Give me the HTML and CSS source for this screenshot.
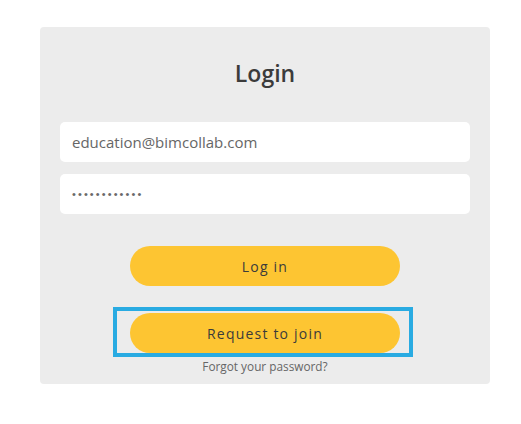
FILE: index.html
```html
<!DOCTYPE html>
<html>
<head>
<meta charset="utf-8">
<link rel="stylesheet" href="styles.css">
</head>
<body>
<div class="card">
  <h1 class="title">Login</h1>
  <div class="field"><span class="value">education@bimcollab.com</span></div>
  <div class="field"><span class="dots">••••••••••••</span></div>
  <div class="actions">
    <div class="btn">Log in</div>
    <div class="btn-wrap">
      <div class="btn btn-join">Request to join</div>
      <div class="highlight"></div>
    </div>
    <div class="forgot">Forgot your password?</div>
  </div>
</div>
</body>
</html>
```

FILE: styles.css
```css
* { box-sizing: border-box; }
body {
  margin: 0;
  padding: 27px 0 0 40px;
  background: #ffffff;
  font-family: "Open Sans", "Liberation Sans", sans-serif;
}
.card {
  width: 450px;
  height: 357px;
  background: #ececec;
  border-radius: 4px;
  padding: 0 20px;
}
.title {
  margin: 0;
  padding-top: 31px;
  height: 95px;
  text-align: center;
  font-size: 23px;
  line-height: 30px;
  font-weight: 600;
  color: #3b3b3b;
}
.field {
  height: 40px;
  background: #ffffff;
  border-radius: 5px;
  padding: 0 12px;
  display: flex;
  align-items: center;
  margin-bottom: 12px;
}
.value {
  font-size: 15px;
  color: #666666;
}
.dots {
  font-family: "Liberation Sans", sans-serif;
  font-size: 11px;
  letter-spacing: 2.1px;
  line-height: 14px;
  color: #6a6a6a;
}
.actions {
  display: flex;
  flex-direction: column;
  align-items: center;
  padding-top: 20px;
}
.btn {
  width: 270px;
  height: 40px;
  border-radius: 20px;
  background: #fdc532;
  display: flex;
  align-items: center;
  justify-content: center;
  font-size: 14px;
  letter-spacing: 1.2px;
  color: #3b3b3b;
}
.btn-wrap {
  position: relative;
  margin-top: 27px;
}
.highlight {
  position: absolute;
  top: -6px;
  left: -17px;
  width: 300px;
  height: 50px;
  border: 4px solid #29abe2;
}
.forgot {
  margin-top: 5px;
  font-size: 11.8px;
  line-height: 16px;
  color: #666666;
}
```
